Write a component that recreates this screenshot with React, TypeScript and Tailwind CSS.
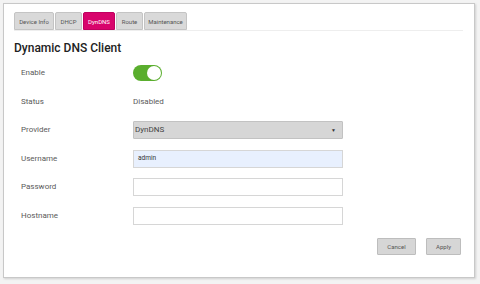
import React from "react";

const Tab = ({ label, active, w }: { label: string; active?: boolean; w: string }) => (
  <div
    className={`${w} h-[18px] flex items-center justify-center text-[6px] rounded-t-[2px] border ${
      active ? "bg-[#d8046c] border-[#c00060] text-white" : "bg-[#d9d9d9] border-[#c4c4c4] text-[#555]"
    }`}
  >
    {label}
  </div>
);

const Row = ({ label, children }: { label: string; children: React.ReactNode }) => (
  <div className="flex items-center h-[28.5px]">
    <div className="w-[112px] text-[8px] text-[#5a5a5a]">{label}</div>
    <div className="flex-1 flex items-center">{children}</div>
  </div>
);

export default function App() {
  return (
    <div className="w-[480px] h-[284px] bg-[#f3f3f3] pt-[3px] pl-[3px]" style={{ fontFamily: "Roboto, 'Liberation Sans', sans-serif" }}>
      <div className="w-[472px] h-[275px] bg-white border border-[#c8c8c8] shadow-[1px_1px_2px_rgba(0,0,0,0.15)] pt-[8px] px-[10px] flex flex-col">
        <div className="flex gap-[1px] border-b border-[#eeeeee] w-[449px]">
          <Tab label="Device Info" w="w-[40px]" />
          <Tab label="DHCP" w="w-[27px]" />
          <Tab label="DynDNS" active w="w-[32px]" />
          <Tab label="Route" w="w-[27px]" />
          <Tab label="Maintenance" w="w-[43px]" />
        </div>
        <div className="mt-[10px] text-[12px] font-medium text-[#222] leading-[14px]">Dynamic DNS Client</div>
        <div className="mt-[4px] pl-[7px] flex flex-col">
          <Row label="Enable">
            <div className="w-[29px] h-[16px] rounded-full bg-[#5aae2e] relative">
              <div className="absolute right-[1px] top-[1px] w-[14px] h-[14px] rounded-full bg-white" />
            </div>
          </Row>
          <Row label="Status">
            <span className="text-[8px] text-[#5a5a5a]">Disabled</span>
          </Row>
          <Row label="Provider">
            <div className="w-[210px] h-[18px] bg-[#d6d6d6] border border-[#c2c2c2] rounded-[1px] flex items-center justify-between px-[1px] pr-[6px]">
              <span className="text-[8px] text-[#444]">DynDNS</span>
              <span className="text-[5px] text-[#333]">▼</span>
            </div>
          </Row>
          <Row label="Username">
            <div className="w-[210px] h-[18px] bg-[#e8f0fe] border border-[#d6d6d6] flex items-center px-[4px]">
              <span className="text-[6.5px] text-[#333]">admin</span>
            </div>
          </Row>
          <Row label="Password">
            <div className="w-[210px] h-[18px] bg-white border border-[#d6d6d6]" />
          </Row>
          <Row label="Hostname">
            <div className="w-[210px] h-[18px] bg-white border border-[#d6d6d6]" />
          </Row>
        </div>
        <div className="flex justify-end gap-[10px] mt-[8px] w-[447px]">
          <div className="w-[39px] h-[17px] bg-[#d6d6d6] border border-[#bdbdbd] rounded-[1px] flex items-center justify-center text-[6px] text-[#555]">Cancel</div>
          <div className="w-[35px] h-[17px] bg-[#d6d6d6] border border-[#bdbdbd] rounded-[1px] flex items-center justify-center text-[6px] text-[#555]">Apply</div>
        </div>
      </div>
    </div>
  );
}
